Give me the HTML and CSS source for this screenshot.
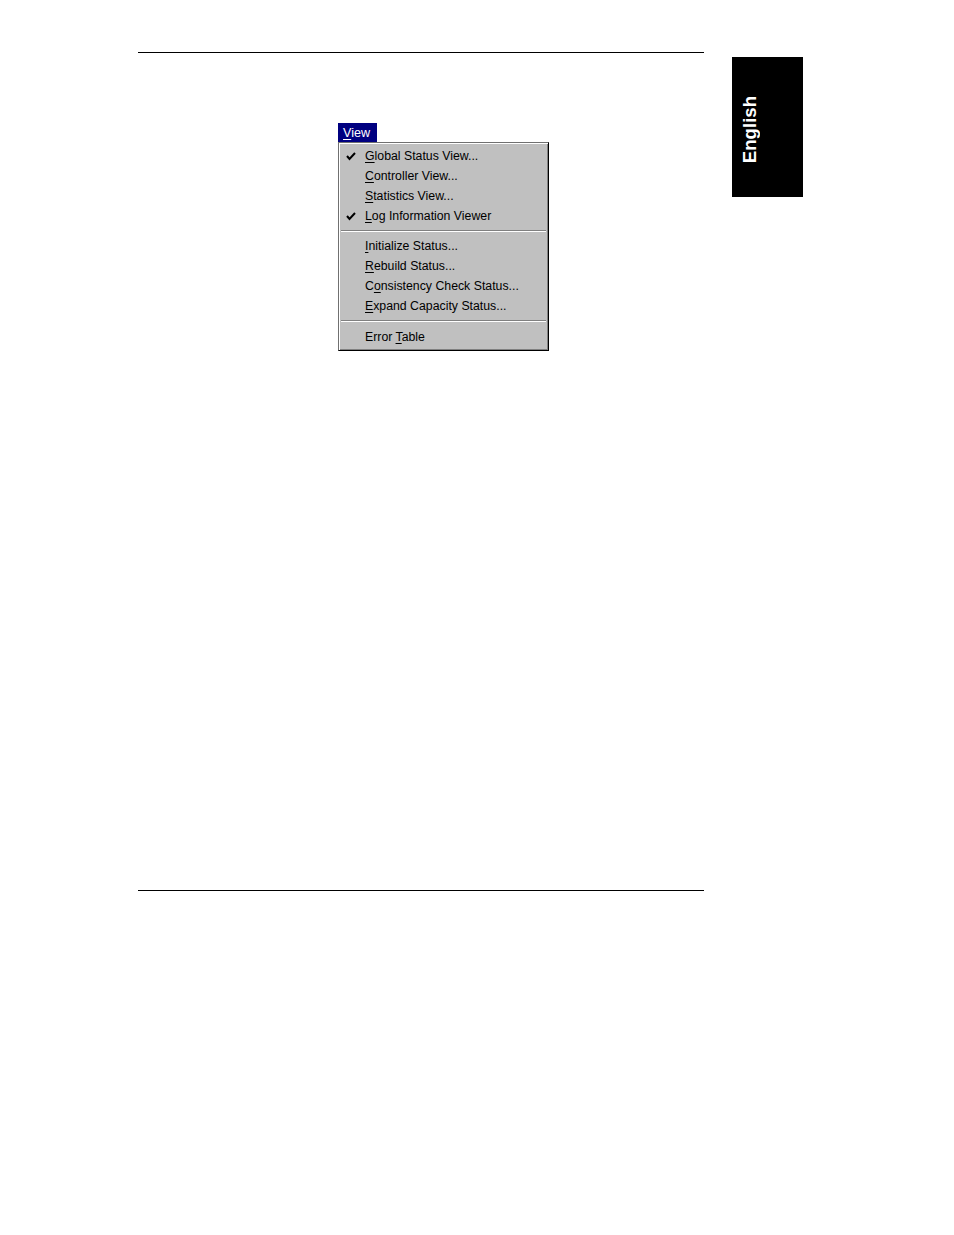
FILE: index.html
```html
<!DOCTYPE html>
<html>
<head>
<meta charset="utf-8">
<link rel="stylesheet" href="styles.css">
</head>
<body>
<div class="page">
  <div class="main">
    <div class="rule"></div>
    <div class="figure-area">
      <div class="menu-wrap">
        <div class="menu-title"><u>V</u>iew</div>
        <div class="menu">
          <div class="item"><span class="check"><svg width="10" height="9" viewBox="0 0 10 9"><path d="M1 4 L3.5 7 L9 1" fill="none" stroke="#000" stroke-width="2"/></svg></span><span class="label"><u>G</u>lobal Status View...</span></div>
          <div class="item"><span class="check"></span><span class="label"><u>C</u>ontroller View...</span></div>
          <div class="item"><span class="check"></span><span class="label"><u>S</u>tatistics View...</span></div>
          <div class="item"><span class="check"><svg width="10" height="9" viewBox="0 0 10 9"><path d="M1 4 L3.5 7 L9 1" fill="none" stroke="#000" stroke-width="2"/></svg></span><span class="label"><u>L</u>og Information Viewer</span></div>
          <div class="sep"></div>
          <div class="item"><span class="check"></span><span class="label"><u>I</u>nitialize Status...</span></div>
          <div class="item"><span class="check"></span><span class="label"><u>R</u>ebuild Status...</span></div>
          <div class="item"><span class="check"></span><span class="label">C<u>o</u>nsistency Check Status...</span></div>
          <div class="item"><span class="check"></span><span class="label"><u>E</u>xpand Capacity Status...</span></div>
          <div class="sep sep-wide"></div>
          <div class="item"><span class="check"></span><span class="label">Error <u>T</u>able</span></div>
        </div>
      </div>
    </div>
    <div class="rule"></div>
  </div>
  <div class="side-tab"><span class="side-text">English</span></div>
</div>
</body>
</html>
```
FILE: styles.css
```css
html, body {
  margin: 0;
  padding: 0;
  background: #fff;
}
.page {
  width: 954px;
  height: 1235px;
  display: flex;
  align-items: flex-start;
  font-family: "Liberation Sans", Arial, sans-serif;
}
.main {
  margin-left: 138px;
  width: 566px;
  padding-top: 52px;
}
.rule {
  height: 1px;
  background: #000;
}
.figure-area {
  height: 837px;
  padding-top: 70px;
  box-sizing: border-box;
}
.menu-wrap {
  margin-left: 200px;
  width: 211px;
}
.menu-title {
  width: 39px;
  height: 19px;
  box-sizing: border-box;
  background: #000080;
  color: #fff;
  font-size: 12.6px;
  line-height: 19px;
  padding-left: 5px;
  padding-top: 1px;
}
.menu-title u {
  text-decoration-thickness: 1px;
  text-underline-offset: 2px;
}
.menu {
  width: 211px;
  height: 209px;
  box-sizing: border-box;
  background: #c0c0c0;
  border: 1px solid;
  border-color: #707070 #000 #000 #707070;
  box-shadow: inset 1px 1px 0 #fff, inset -1px -1px 0 #808080;
  padding-top: 3px;
}
.item {
  height: 20px;
  display: flex;
  align-items: center;
  font-size: 12.3px;
  color: #000;
}
.item u {
  text-decoration-thickness: 1px;
  text-underline-offset: 2px;
}
.check {
  width: 26px;
  padding-left: 7px;
  box-sizing: border-box;
  display: flex;
  align-items: center;
  height: 20px;
}
.label {
  white-space: nowrap;
}
.sep {
  height: 10px;
  margin: 0 2px;
  background: linear-gradient(to bottom, transparent 4px, #808080 4px, #808080 5px, #fff 5px, #fff 6px, transparent 6px);
}
.sep-wide {
  height: 11px;
}
.side-tab {
  margin-left: 28px;
  margin-top: 57px;
  width: 71px;
  height: 140px;
  background: #000;
  display: flex;
  align-items: center;
  justify-content: flex-start;
  padding-left: 7px;
  padding-top: 6px;
  box-sizing: border-box;
}
.side-text {
  writing-mode: vertical-rl;
  transform: rotate(180deg);
  color: #fff;
  font-weight: bold;
  font-size: 18.6px;
  line-height: 22px;
}
```
